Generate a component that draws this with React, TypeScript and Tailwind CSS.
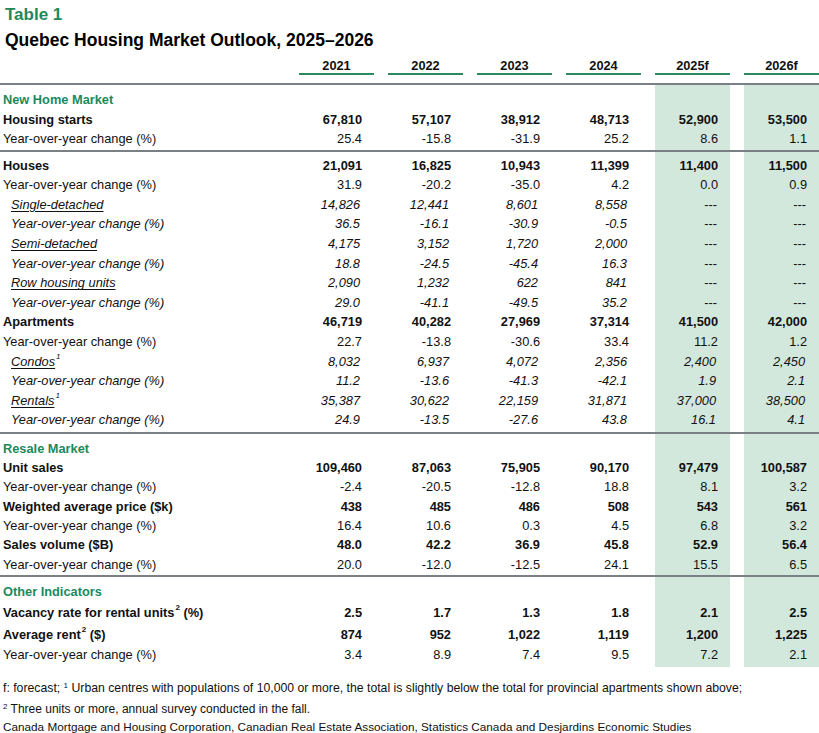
type Kind = "bold" | "yoy" | "sub" | "subyoy" | "section";

type Row = {
  kind: Kind;
  label: string;
  sup?: string;
  values?: string[];
};

const GRID = "grid grid-cols-[285px_75px_75px_75px_75px_75px_75px] gap-x-[14px]";
const SHADE = "bg-[#d3e8dc]";

const newHome: Row[] = [
  { kind: "section", label: "New Home Market" },
  { kind: "bold", label: "Housing starts", values: ["67,810", "57,107", "38,912", "48,713", "52,900", "53,500"] },
  { kind: "yoy", label: "Year-over-year change (%)", values: ["25.4", "-15.8", "-31.9", "25.2", "8.6", "1.1"] },
];

const types: Row[] = [
  { kind: "bold", label: "Houses", values: ["21,091", "16,825", "10,943", "11,399", "11,400", "11,500"] },
  { kind: "yoy", label: "Year-over-year change (%)", values: ["31.9", "-20.2", "-35.0", "4.2", "0.0", "0.9"] },
  { kind: "sub", label: "Single-detached", values: ["14,826", "12,441", "8,601", "8,558", "---", "---"] },
  { kind: "subyoy", label: "Year-over-year change (%)", values: ["36.5", "-16.1", "-30.9", "-0.5", "---", "---"] },
  { kind: "sub", label: "Semi-detached", values: ["4,175", "3,152", "1,720", "2,000", "---", "---"] },
  { kind: "subyoy", label: "Year-over-year change (%)", values: ["18.8", "-24.5", "-45.4", "16.3", "---", "---"] },
  { kind: "sub", label: "Row housing units", values: ["2,090", "1,232", "622", "841", "---", "---"] },
  { kind: "subyoy", label: "Year-over-year change (%)", values: ["29.0", "-41.1", "-49.5", "35.2", "---", "---"] },
  { kind: "bold", label: "Apartments", values: ["46,719", "40,282", "27,969", "37,314", "41,500", "42,000"] },
  { kind: "yoy", label: "Year-over-year change (%)", values: ["22.7", "-13.8", "-30.6", "33.4", "11.2", "1.2"] },
  { kind: "sub", label: "Condos", sup: "1", values: ["8,032", "6,937", "4,072", "2,356", "2,400", "2,450"] },
  { kind: "subyoy", label: "Year-over-year change (%)", values: ["11.2", "-13.6", "-41.3", "-42.1", "1.9", "2.1"] },
  { kind: "sub", label: "Rentals", sup: "1", values: ["35,387", "30,622", "22,159", "31,871", "37,000", "38,500"] },
  { kind: "subyoy", label: "Year-over-year change (%)", values: ["24.9", "-13.5", "-27.6", "43.8", "16.1", "4.1"] },
];

const resale: Row[] = [
  { kind: "section", label: "Resale Market" },
  { kind: "bold", label: "Unit sales", values: ["109,460", "87,063", "75,905", "90,170", "97,479", "100,587"] },
  { kind: "yoy", label: "Year-over-year change (%)", values: ["-2.4", "-20.5", "-12.8", "18.8", "8.1", "3.2"] },
  { kind: "bold", label: "Weighted average price ($k)", values: ["438", "485", "486", "508", "543", "561"] },
  { kind: "yoy", label: "Year-over-year change (%)", values: ["16.4", "10.6", "0.3", "4.5", "6.8", "3.2"] },
  { kind: "bold", label: "Sales volume ($B)", values: ["48.0", "42.2", "36.9", "45.8", "52.9", "56.4"] },
  { kind: "yoy", label: "Year-over-year change (%)", values: ["20.0", "-12.0", "-12.5", "24.1", "15.5", "6.5"] },
];

const years = ["2021", "2022", "2023", "2024", "2025f", "2026f"];

function Spacer({ h }: { h: string }) {
  return (
    <div className={`${GRID} ${h}`}>
      <div className="col-span-5" />
      <div className={SHADE} />
      <div className={SHADE} />
    </div>
  );
}

function Rule() {
  return <div className="h-[2px] bg-[#7b8084]" />;
}

function TableRow({ row, h }: { row: Row; h: string }) {
  const italic = row.kind === "sub" || row.kind === "subyoy";
  return (
    <div className={`${GRID} ${h}`}>
      <div
        className={`flex items-center whitespace-nowrap ${italic ? "pl-[11px] italic" : "pl-[3px]"} ${
          row.kind === "bold" ? "font-bold" : ""
        } ${row.kind === "section" ? "font-bold text-[#1b8a5b]" : ""}`}
      >
        <span className={row.kind === "sub" ? "underline underline-offset-2" : ""}>{row.label}</span>
        {row.sup && <sup className="text-[8px] ml-[1px]">{row.sup}</sup>}
      </div>
      {years.map((y, i) => {
        const v = row.values?.[i] ?? "";
        const dash = v === "---";
        return (
          <div
            key={y}
            className={`flex items-center justify-end ${i >= 4 ? SHADE : ""} ${
              row.kind === "bold" ? "font-bold pr-[12px]" : ""
            } ${italic && !dash ? "italic pr-[14px]" : ""} ${!italic && row.kind !== "bold" ? "pr-[12px]" : ""} ${
              dash ? "pr-[13px]" : ""
            }`}
          >
            {v}
          </div>
        );
      })}
    </div>
  );
}

export default function App() {
  return (
    <div className="w-[819px] h-[733px] bg-white text-[#111] font-['Liberation_Sans',Arial,sans-serif] text-[12.8px] overflow-hidden">
      <div className="pt-[1px] pl-[5px] h-[27px] leading-[27px] text-[17px] font-bold text-[#1b8a5b]">Table 1</div>
      <div className="pl-[5px] h-[26px] leading-[26px] text-[17.5px] font-bold text-black">
        Quebec Housing Market Outlook, 2025–2026
      </div>

      {/* Year header */}
      <div className={`${GRID} h-[30px]`}>
        <div />
        {years.map((y) => (
          <div key={y} className="pt-[5px]">
            <div className="h-[17px] leading-[16px] text-center font-bold border-b-2 border-[#2a8a5d]">{y}</div>
          </div>
        ))}
      </div>
      <Rule />

      {/* New home market */}
      <Spacer h="h-[5px]" />
      {newHome.map((r, i) => (
        <TableRow key={i} row={r} h="h-[19.5px]" />
      ))}
      <Spacer h="h-[1.5px]" />
      <Rule />
      <Spacer h="h-[3.5px]" />
      {types.map((r, i) => (
        <TableRow key={i} row={r} h="h-[19.6px]" />
      ))}
      <Spacer h="h-[2px]" />
      <Rule />

      {/* Resale market */}
      <Spacer h="h-[5px]" />
      {resale.map((r, i) => (
        <TableRow key={i} row={r} h="h-[19.3px]" />
      ))}
      <Spacer h="h-[1.5px]" />
      <Rule />

      {/* Other indicators */}
      <Spacer h="h-[4.5px]" />
      <TableRow row={{ kind: "section", label: "Other Indicators" }} h="h-[19.5px]" />
      <div className={`${GRID} h-[22px]`}>
        <div className="flex items-center pl-[3px] font-bold whitespace-nowrap">
          Vacancy rate for rental units<sup className="text-[8px] ml-[1px]">2</sup>&nbsp;(%)
        </div>
        {["2.5", "1.7", "1.3", "1.8", "2.1", "2.5"].map((v, i) => (
          <div key={i} className={`flex items-center justify-end pr-[12px] font-bold ${i >= 4 ? SHADE : ""}`}>
            {v}
          </div>
        ))}
      </div>
      <div className={`${GRID} h-[21.5px]`}>
        <div className="flex items-center pl-[3px] font-bold whitespace-nowrap">
          Average rent<sup className="text-[8px] ml-[1px]">2</sup>&nbsp;($)
        </div>
        {["874", "952", "1,022", "1,119", "1,200", "1,225"].map((v, i) => (
          <div key={i} className={`flex items-center justify-end pr-[12px] font-bold ${i >= 4 ? SHADE : ""}`}>
            {v}
          </div>
        ))}
      </div>
      <TableRow
        row={{ kind: "yoy", label: "Year-over-year change (%)", values: ["3.4", "8.9", "7.4", "9.5", "7.2", "2.1"] }}
        h="h-[20px]"
      />
      <Spacer h="h-[2px]" />

      {/* Notes */}
      <div className="pt-[11px] pl-[3px]">
        <div className="h-[20px] leading-[20px] whitespace-nowrap text-[12.25px]">
          f: forecast; <sup className="text-[8px]">1</sup> Urban centres with populations of 10,000 or more, the total is
          slightly below the total for provincial apartments shown above;
        </div>
        <div className="h-[21px] leading-[22px] whitespace-nowrap text-[12px]">
          <sup className="text-[8px]">2</sup> Three units or more, annual survey conducted in the fall.
        </div>
        <div className="h-[17px] leading-[16px] whitespace-nowrap text-[11.75px]">
          Canada Mortgage and Housing Corporation, Canadian Real Estate Association, Statistics Canada and Desjardins
          Economic Studies
        </div>
      </div>
    </div>
  );
}
